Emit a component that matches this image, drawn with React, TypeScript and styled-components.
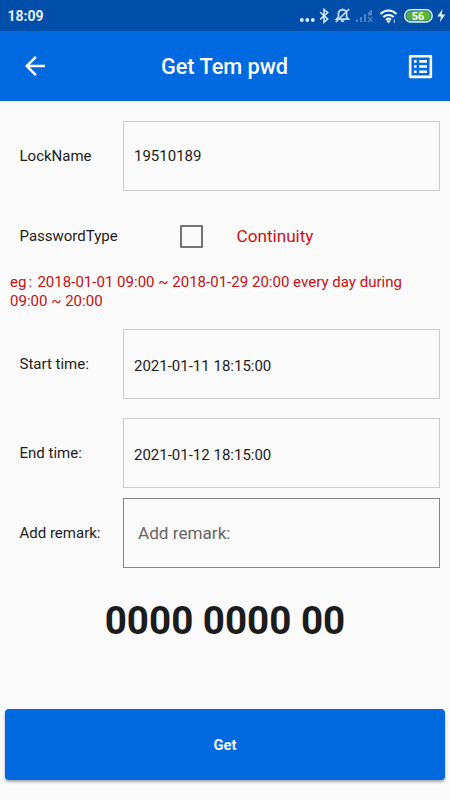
import React from "react";
import styled, { createGlobalStyle } from "styled-components";

const GlobalStyle = createGlobalStyle`
  *, *::before, *::after { box-sizing: border-box; }
  body {
    margin: 0;
    background: #fafafa;
    color: #1c1c1c;
    font-family: Roboto, "Noto Sans", sans-serif;
  }
`;

const Screen = styled.div`
  display: flex;
  flex-direction: column;
  width: 450px;
  height: 800px;
  overflow: hidden;
  background: #fafafa;
`;

const StatusBar = styled.header`
  display: flex;
  align-items: center;
  justify-content: space-between;
  flex: none;
  height: 31px;
  padding: 1px 3px 0 7.5px;
  background: #004ea9;
  color: #e4f0ff;
`;

const Clock = styled.span`
  font-size: 14px;
  font-weight: 700;
  line-height: 16px;
`;

const StatusIcons = styled.svg`
  display: block;
  width: 152px;
  height: 30px;
`;

const AppBar = styled.nav`
  display: grid;
  grid-template-columns: 70px 1fr 60px;
  align-items: center;
  flex: none;
  height: 70px;
  background: #0069e0;
  color: #fff;
`;

const IconButton = styled.button`
  display: flex;
  align-items: center;
  justify-content: center;
  width: 100%;
  height: 70px;
  padding: 0;
  border: 0;
  background: none;
  color: inherit;
`;

const Title = styled.h1`
  margin: 0;
  padding: 1px 11px 0 0;
  font-size: 21.7px;
  font-weight: 500;
  line-height: 26px;
  text-align: center;
`;

const Form = styled.main`
  display: flex;
  flex-direction: column;
  flex: 1;
  padding: 20px 10px 0;
`;

const Row = styled.div<{ $gap?: number }>`
  display: grid;
  grid-template-columns: 112.5px 317.5px;
  align-items: center;
  height: 70px;
  margin-top: ${(p) => p.$gap ?? 0}px;
`;

const Label = styled.label`
  padding-left: 9.5px;
  font-size: 15px;
  line-height: 18px;
  white-space: nowrap;
`;

const Field = styled.div<{ $shift?: number }>`
  display: flex;
  align-items: center;
  height: 70px;
  padding: ${(p) => p.$shift ?? 0}px 10.5px 0;
  border: 1px solid #cacaca;
  font-size: 15px;
  line-height: 18px;
`;

const RemarkInput = styled.input`
  width: 100%;
  height: 70px;
  padding: 0 14.5px;
  border: 1px solid #858585;
  border-radius: 0;
  outline: 0;
  background: transparent;
  font: 400 17.15px/21px Roboto, sans-serif;

  &::placeholder {
    color: #666;
    opacity: 1;
  }
`;

const TypeChoice = styled.div`
  display: flex;
  align-items: center;
  gap: 33.5px;
  padding-left: 57.5px;
  color: #cb1016;
  font-size: 17.15px;
  line-height: 21px;
`;

const Checkbox = styled.span`
  width: 23px;
  height: 23px;
  border: 2px solid #737373;
  border-radius: 1px;
`;

const Hint = styled.p`
  height: 38px;
  margin: 2px 0 0;
  color: #c41014;
  font-size: 15px;
  line-height: 18.5px;
  letter-spacing: 0.02px;
  white-space: nowrap;
`;

const Colon = styled.span`
  display: inline-block;
  width: 11px;
  padding-left: 2px;
`;

const Password = styled.output`
  margin-top: 29px;
  font-size: 38.6px;
  font-weight: 700;
  line-height: 48px;
  text-align: center;
`;

const SubmitButton = styled.button`
  flex: none;
  height: 71px;
  margin: 0 5px 20px;
  padding: 0;
  border: 0;
  border-radius: 4px;
  background: #0069e0;
  box-shadow: 0 2px 3px rgba(0, 0, 0, 0.32);
  color: #f2f8ff;
  font: 700 14.7px/18px Roboto, sans-serif;
`;

function StatusGlyphs() {
  return (
    <StatusIcons viewBox="295 1 152 30" aria-hidden="true">
      <g fill="#dceaff">
        <circle cx="301.8" cy="20" r="1.9" />
        <circle cx="307.3" cy="20" r="1.9" />
        <circle cx="312.8" cy="20" r="1.9" />
      </g>
      <path d="M320.2 12.2 327.7 19 324 22.3V9.3l3.7 3.3-7.5 6.8" fill="none" stroke="#dceaff" strokeWidth="1.5" />
      <g fill="none" stroke="#c6dcf7" strokeWidth="1.7">
        <path d="M336.5 19.2h12l-1.9-2.2v-3.3c0-5-8.2-5-8.2 0V17zM342.5 10V8.5M340.8 21.2h3.4" />
        <path d="m335.8 22 13.4-13" />
      </g>
      <g fill="#4b82c8">
        <path d="M356 19.5h2V22h-2zM360 17h2v5h-2zM364 14h2v8h-2zM368 15.5v-3l4-3v6z" />
        <path d="m368 17 4.3 5M372.3 17l-4.3 5" stroke="#4b82c8" strokeWidth="1.3" />
      </g>
      <g fill="none" stroke="#f4f9ff" strokeWidth="2">
        <path d="M380.5 14c4.8-4.6 11.2-4.6 16 0M383.3 17c3-2.8 7.4-2.8 10.4 0M386 19.8c1.5-1.4 3.5-1.4 5 0" />
      </g>
      <path d="m388.5 23.5-2.5-3h5z" fill="#f4f9ff" />
      <path d="M394.3 19.5v3.5" stroke="#b9d3f4" />
      <rect x="404.7" y="9.7" width="27.5" height="12.3" rx="6" fill="#387f91" stroke="#e4f0ff" strokeWidth="1.3" />
      <path d="M411 11.5h12v8.8h-12a4.4 4.4 0 0 1 0-8.8z" fill="#55ad37" />
      <path d="M418 11.5h8a4.4 4.4 0 0 1 0 8.8h-8z" fill="#55bf25" />
      <text x="418" y="19.7" fill="#fff" fontSize="10.8" fontWeight="700" textAnchor="middle">56</text>
      <path d="m442.7 9-5.5 7.5h3.7l-1 5.8 5.4-7.7h-3.7z" fill="#e4f0ff" />
    </StatusIcons>
  );
}

function BackIcon() {
  return (
    <svg width="30" height="30" viewBox="0 0 24 24" fill="currentColor" aria-hidden="true">
      <path d="M20 11H7.83l5.59-5.59L12 4l-8 8 8 8 1.41-1.41L7.83 13H20z" />
    </svg>
  );
}

function RecordsIcon() {
  return (
    <svg width="31" height="31" viewBox="0 0 24 24" fill="currentColor" aria-hidden="true">
      <path d="M19 5v14H5V5h14m1.1-2H3.9c-.5 0-.9.4-.9.9v16.2c0 .4.4.9.9.9h16.2c.4 0 .9-.5.9-.9V3.9c0-.5-.5-.9-.9-.9zM11 7h6v2h-6V7zm0 4h6v2h-6v-2zm0 4h6v2h-6v-2zM7 7h2v2H7V7zm0 4h2v2H7v-2zm0 4h2v2H7v-2z" />
    </svg>
  );
}

export default function App() {
  return (
    <>
      <GlobalStyle />
      <Screen>
        <StatusBar>
          <Clock>18:09</Clock>
          <StatusGlyphs />
        </StatusBar>
        <AppBar>
          <IconButton aria-label="Back"><BackIcon /></IconButton>
          <Title>Get Tem pwd</Title>
          <IconButton aria-label="Records"><RecordsIcon /></IconButton>
        </AppBar>
        <Form>
          <Row>
            <Label>LockName</Label>
            <Field>19510189</Field>
          </Row>
          <Row $gap={10}>
            <Label>PasswordType</Label>
            <TypeChoice>
              <Checkbox role="checkbox" aria-checked={false} aria-label="Continuity" />
              <span>Continuity</span>
            </TypeChoice>
          </Row>
          <Hint>
            eg<Colon>:</Colon>2018-01-01 09:00 ~ 2018-01-29 20:00 every day during
            <br />
            09:00 ~ 20:00
          </Hint>
          <Row $gap={18}>
            <Label>Start time:</Label>
            <Field $shift={4}>2021-01-11 18:15:00</Field>
          </Row>
          <Row $gap={19}>
            <Label>End time:</Label>
            <Field $shift={4}>2021-01-12 18:15:00</Field>
          </Row>
          <Row $gap={10}>
            <Label htmlFor="remark">Add remark:</Label>
            <RemarkInput id="remark" placeholder="Add remark:" />
          </Row>
          <Password>0000 0000 00</Password>
        </Form>
        <SubmitButton>Get</SubmitButton>
      </Screen>
    </>
  );
}
